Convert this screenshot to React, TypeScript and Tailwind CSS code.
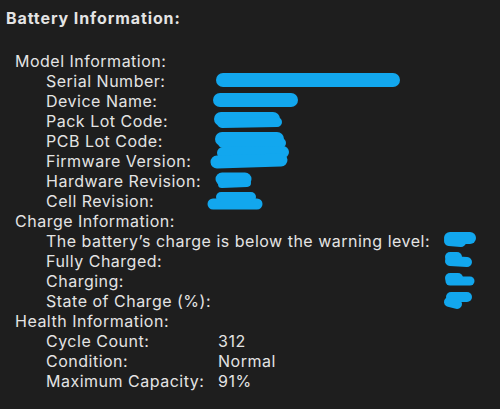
import React from "react";

type Stroke = { d: string; w: number };

const BLUE = "#12a7ee";

// redaction scribbles, coords local to the value cell
function Scribble({ strokes }: { strokes: Stroke[] }) {
    return (
        <svg width="1" height="20" className="overflow-visible block">
            {strokes.map((s, i) => (
                <path key={i} d={s.d} stroke={BLUE} strokeWidth={s.w} strokeLinecap="round" strokeLinejoin="round" fill="none" />
            ))}
        </svg>
    );
}

const modelRows: { label: string; strokes: Stroke[] }[] = [
    { label: "Serial Number:", strokes: [{ d: "M10 9 L180 9", w: 14 }] },
    { label: "Device Name:", strokes: [{ d: "M7 9 L78 9", w: 14 }] },
    { label: "Pack Lot Code:", strokes: [{ d: "M8 8 L60 8", w: 14 }, { d: "M9 12 L64 11", w: 10 }] },
    { label: "PCB Lot Code:", strokes: [{ d: "M9 8 L64 8", w: 14 }, { d: "M10 12 L68 12", w: 10 }] },
    { label: "Firmware Version:", strokes: [{ d: "M10 2 L70 1", w: 12 }, { d: "M4 11 L68 9", w: 13 }] },
    { label: "Hardware Revision:", strokes: [{ d: "M9 8 L32 8", w: 13 }, { d: "M9 13 L34 12", w: 8 }] },
    { label: "Cell Revision:", strokes: [{ d: "M0 13 L44 13", w: 11 }, { d: "M8 6 L38 6", w: 10 }] },
];

const chargeRows: { label: string; strokes: Stroke[] }[] = [
    { label: "The battery’s charge is below the warning level:", strokes: [{ d: "M5 7 L25 7", w: 12 }, { d: "M4 10 L16 11", w: 10 }] },
    { label: "Fully Charged:", strokes: [{ d: "M5 6 L12 6", w: 10 }, { d: "M5 10 L22 11", w: 10 }] },
    { label: "Charging:", strokes: [{ d: "M5 7 L13 7", w: 10 }, { d: "M5 10 L25 10", w: 9 }] },
    { label: "State of Charge (%):", strokes: [{ d: "M6 6 L22 6", w: 10 }, { d: "M4 11 L12 13", w: 10 }] },
];

const healthRows = [
    { label: "Cycle Count:", value: "312" },
    { label: "Condition:", value: "Normal" },
    { label: "Maximum Capacity:", value: "91%" },
];

export default function App() {
    return (
        <div className="w-[500px] h-[409px] overflow-hidden bg-[#1e1e1e] text-[#e4e4e4] font-['Inter','Liberation_Sans',sans-serif] text-[16px] leading-[20px] tracking-[0.5px] pt-[8px]">
            <div className="pl-[6px] font-bold tracking-[0.9px]">Battery Information:</div>

            <div className="mt-[23px] pl-[15px]">
                <div>Model Information:</div>
                <div className="grid grid-cols-[167px_1fr] pl-[31px]">
                    {modelRows.map((r) => (
                        <React.Fragment key={r.label}>
                            <div className="whitespace-nowrap">{r.label}</div>
                            <div className="h-5"><Scribble strokes={r.strokes} /></div>
                        </React.Fragment>
                    ))}
                </div>

                <div>Charge Information:</div>
                <div className="grid grid-cols-[399px_1fr] pl-[31px]">
                    {chargeRows.map((r) => (
                        <React.Fragment key={r.label}>
                            <div className="whitespace-nowrap">{r.label}</div>
                            <div className="h-5"><Scribble strokes={r.strokes} /></div>
                        </React.Fragment>
                    ))}
                </div>

                <div>Health Information:</div>
                <div className="grid grid-cols-[172px_1fr] pl-[31px]">
                    {healthRows.map((r) => (
                        <React.Fragment key={r.label}>
                            <div className="whitespace-nowrap">{r.label}</div>
                            <div>{r.value}</div>
                        </React.Fragment>
                    ))}
                </div>
            </div>
        </div>
    );
}
